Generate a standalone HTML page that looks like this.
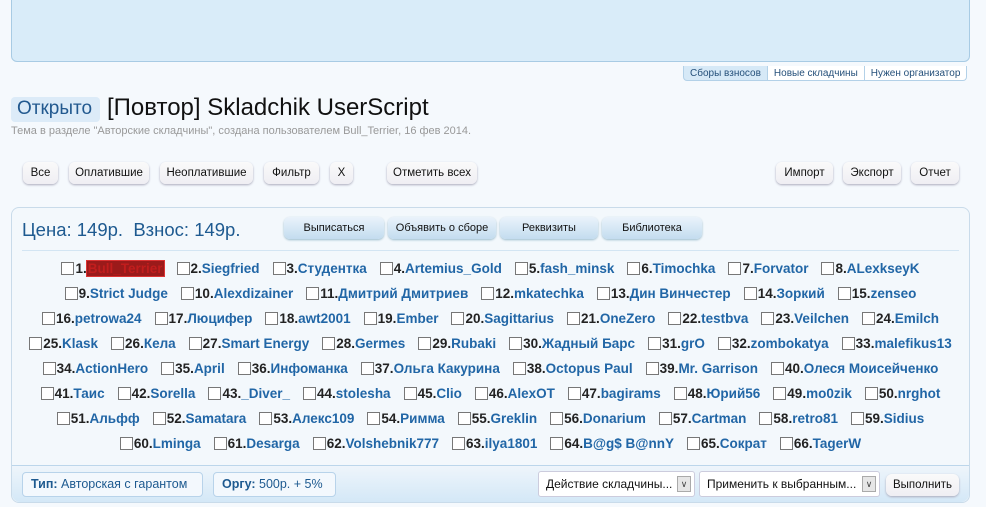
<!DOCTYPE html>
<html><head><meta charset="utf-8"><style>
*{box-sizing:border-box;margin:0;padding:0}
body{width:986px;height:507px;overflow:hidden;background:#f5f9fd;font-family:"Liberation Sans",Arial,sans-serif;position:relative}
.top{position:absolute;left:11px;top:-5px;width:959px;height:67px;background:#d9ecf9;border:1px solid #a8cbe4;border-radius:0 0 6px 6px}
.tabs{position:absolute;top:66px;left:684px;display:flex;font-size:10px;color:#25507a;white-space:nowrap}
.tabs div{border:1px solid #b3d1e8;border-top:none;padding:1px 6px;height:15px;background:#fff;margin-left:-1px;line-height:13px}
.tabs div:first-child{background:#d6e9f7;border-radius:0 0 0 4px}
.tabs div:last-child{border-radius:0 0 4px 0}
.open{position:absolute;left:11px;top:97px;width:89px;height:25px;background:#dcebf8;border-radius:4px;color:#22598f;font-size:19px;padding:1px 6px}
.title{position:absolute;left:107px;top:94px;font-size:24px;color:#111;white-space:nowrap}
.sub{position:absolute;left:11px;top:125px;font-size:11px;color:#999}
.btn{position:absolute;top:162px;height:22px;background:linear-gradient(#fafafa,#efeef3);border-radius:6px;box-shadow:0 1px 2px #aab;font-size:11.5px;color:#111;text-align:center;line-height:22px}
.box{position:absolute;left:11px;top:207px;width:959px;height:296px;border:1px solid #c9dbea;border-radius:8px;background:#f3f8fc}
.price{position:absolute;left:22px;top:219px;font-size:18.5px;color:#1e5a90;white-space:nowrap}
.bb{position:absolute;top:217px;height:22px;background:linear-gradient(#eaf3fb,#c3dcef);border-radius:6px;box-shadow:0 1px 2px #9bc;font-size:11px;color:#111;text-align:center;line-height:22px}
.sep{position:absolute;left:22px;top:250px;width:937px;border-top:1px solid #d3e5f3}
.row{position:absolute;left:11px;width:959px;text-align:center;font-size:13.5px;font-weight:bold;color:#222;white-space:nowrap;line-height:16px}
.row span{margin:0 6.5px}
.row i{display:inline-block;width:13px;height:13px;border:1px solid #777;background:#fff;vertical-align:-2px;margin-right:1px}
.row b{color:#2166a6}
.row b.r{background:#9b1a1a;color:#c21d1d;outline:1px solid #d33;padding:0 1px}
.foot{position:absolute;left:12px;top:465px;width:957px;height:37px;background:linear-gradient(#eef5fb,#d4e8f7);border-top:1px solid #bcd6eb;border-radius:0 0 8px 8px}
.tag{position:absolute;top:472px;height:25px;border:1px solid #b8d3ea;border-radius:4px;background:#f3f8fd;font-size:12.5px;color:#1e5a90;line-height:23px;padding:0 8px;white-space:nowrap}
.sel{position:absolute;top:471px;height:26px;border:1px solid #ccd;border-radius:3px;background:#fff;font-size:12px;color:#111;line-height:24px;padding-left:7px;white-space:nowrap}
.sel s{position:absolute;right:3px;top:4px;width:14px;height:16px;border:1px solid #aaa;background:#e6e6e6;text-decoration:none;font-size:9px;line-height:14px;text-align:center;color:#444}
</style></head><body>
<div class="top"></div>
<div class="tabs"><div>Сборы взносов</div><div>Новые складчины</div><div>Нужен организатор</div></div>
<div class="open">Открыто</div>
<div class="title">[Повтор] Skladchik UserScript</div>
<div class="sub">Тема в разделе "Авторские складчины", создана пользователем Bull_Terrier, 16 фев 2014.</div>
<div class="btn" style="left:23px;width:35px">Все</div>
<div class="btn" style="left:69px;width:80px">Оплатившие</div>
<div class="btn" style="left:160px;width:93px">Неоплатившие</div>
<div class="btn" style="left:264px;width:55px">Фильтр</div>
<div class="btn" style="left:330px;width:23px">X</div>
<div class="btn" style="left:387px;width:90px">Отметить всех</div>
<div class="btn" style="left:776px;width:57px">Импорт</div>
<div class="btn" style="left:843px;width:58px">Экспорт</div>
<div class="btn" style="left:911px;width:48px">Отчет</div>
<div class="box"></div>
<div class="price">Цена: 149р.&nbsp; Взнос: 149р.</div>
<div class="bb" style="left:284px;width:100px">Выписаться</div>
<div class="bb" style="left:388px;width:108px">Объявить о сборе</div>
<div class="bb" style="left:500px;width:98px">Реквизиты</div>
<div class="bb" style="left:602px;width:100px">Библиотека</div>
<div class="sep"></div>
<div class="row" style="top:261px"><span><i></i>1.<b class="r">Bull_Terrier</b></span><span><i></i>2.<b>Siegfried</b></span><span><i></i>3.<b>Студентка</b></span><span><i></i>4.<b>Artemius_Gold</b></span><span><i></i>5.<b>fash_minsk</b></span><span><i></i>6.<b>Timochka</b></span><span><i></i>7.<b>Forvator</b></span><span><i></i>8.<b>ALexkseyK</b></span></div>
<div class="row" style="top:286px"><span><i></i>9.<b>Strict Judge</b></span><span><i></i>10.<b>Alexdizainer</b></span><span><i></i>11.<b>Дмитрий Дмитриев</b></span><span><i></i>12.<b>mkatechka</b></span><span><i></i>13.<b>Дин Винчестер</b></span><span><i></i>14.<b>Зоркий</b></span><span><i></i>15.<b>zenseo</b></span></div>
<div class="row" style="top:311px"><span><i></i>16.<b>petrowa24</b></span><span><i></i>17.<b>Люцифер</b></span><span><i></i>18.<b>awt2001</b></span><span><i></i>19.<b>Ember</b></span><span><i></i>20.<b>Sagittarius</b></span><span><i></i>21.<b>OneZero</b></span><span><i></i>22.<b>testbva</b></span><span><i></i>23.<b>Veilchen</b></span><span><i></i>24.<b>Emilch</b></span></div>
<div class="row" style="top:336px"><span><i></i>25.<b>Klask</b></span><span><i></i>26.<b>Кела</b></span><span><i></i>27.<b>Smart Energy</b></span><span><i></i>28.<b>Germes</b></span><span><i></i>29.<b>Rubaki</b></span><span><i></i>30.<b>Жадный Барс</b></span><span><i></i>31.<b>grO</b></span><span><i></i>32.<b>zombokatya</b></span><span><i></i>33.<b>malefikus13</b></span></div>
<div class="row" style="top:361px"><span><i></i>34.<b>ActionHero</b></span><span><i></i>35.<b>April</b></span><span><i></i>36.<b>Инфоманка</b></span><span><i></i>37.<b>Ольга Какурина</b></span><span><i></i>38.<b>Octopus Paul</b></span><span><i></i>39.<b>Mr. Garrison</b></span><span><i></i>40.<b>Олеся Моисейченко</b></span></div>
<div class="row" style="top:386px"><span><i></i>41.<b>Таис</b></span><span><i></i>42.<b>Sorella</b></span><span><i></i>43.<b>_Diver_</b></span><span><i></i>44.<b>stolesha</b></span><span><i></i>45.<b>Clio</b></span><span><i></i>46.<b>AlexOT</b></span><span><i></i>47.<b>bagirams</b></span><span><i></i>48.<b>Юрий56</b></span><span><i></i>49.<b>mo0zik</b></span><span><i></i>50.<b>nrghot</b></span></div>
<div class="row" style="top:411px"><span><i></i>51.<b>Альфф</b></span><span><i></i>52.<b>Samatara</b></span><span><i></i>53.<b>Алекс109</b></span><span><i></i>54.<b>Римма</b></span><span><i></i>55.<b>Greklin</b></span><span><i></i>56.<b>Donarium</b></span><span><i></i>57.<b>Cartman</b></span><span><i></i>58.<b>retro81</b></span><span><i></i>59.<b>Sidius</b></span></div>
<div class="row" style="top:436px"><span><i></i>60.<b>Lminga</b></span><span><i></i>61.<b>Desarga</b></span><span><i></i>62.<b>Volshebnik777</b></span><span><i></i>63.<b>ilya1801</b></span><span><i></i>64.<b>B@g$ B@nnY</b></span><span><i></i>65.<b>Сократ</b></span><span><i></i>66.<b>TagerW</b></span></div>
<div class="foot"></div>
<div class="tag" style="left:22px;width:181px"><b>Тип:</b> Авторская с гарантом</div>
<div class="tag" style="left:213px;width:123px"><b>Оргу:</b> 500р. + 5%</div>
<div class="sel" style="left:538px;width:157px">Действие складчины...<s>&#8744;</s></div>
<div class="sel" style="left:699px;width:181px">Применить к выбранным...<s>&#8744;</s></div>
<div class="btn" style="left:886px;top:474px;width:73px">Выполнить</div>
</body></html>
